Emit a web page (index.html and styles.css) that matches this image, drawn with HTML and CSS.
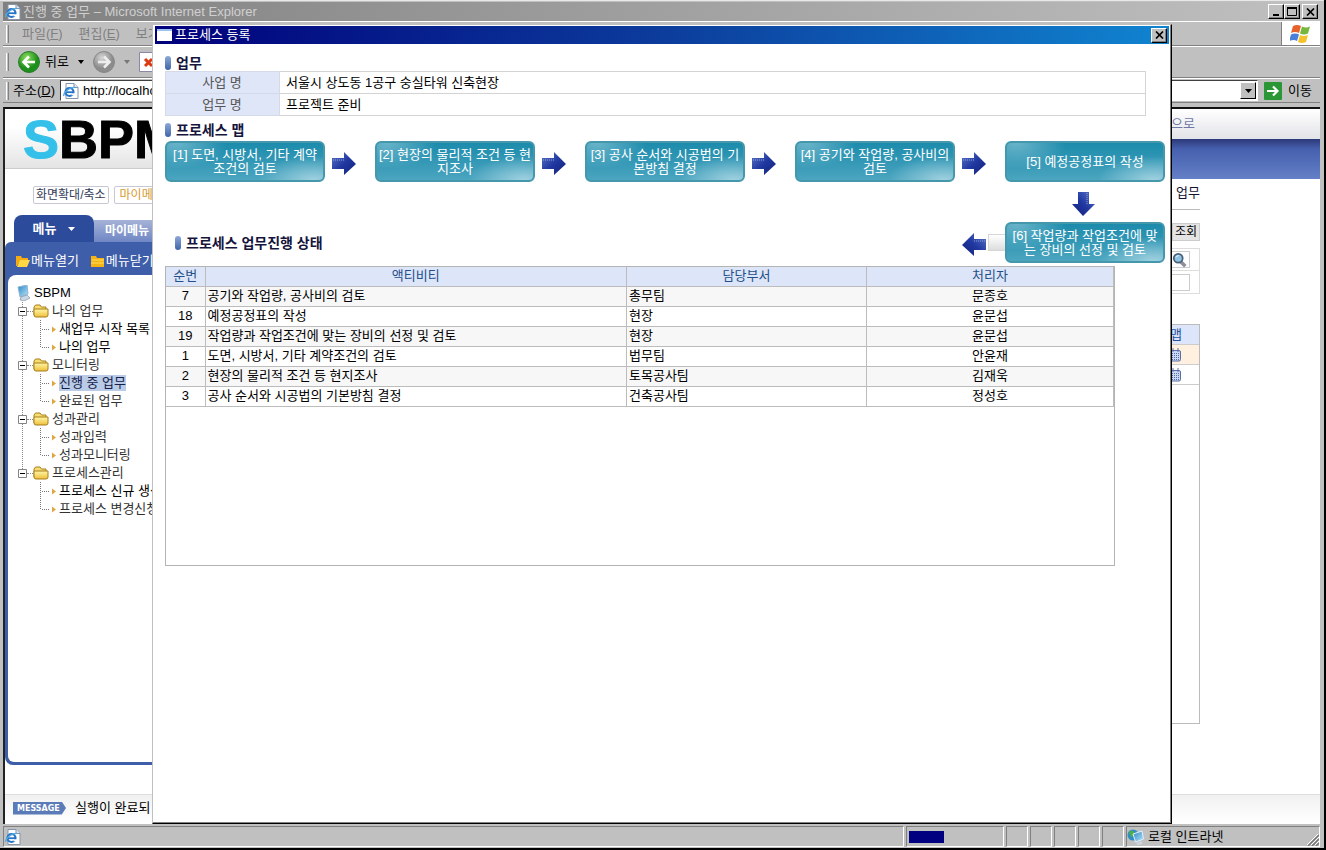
FILE: index.html
```
<!DOCTYPE html>
<html lang="ko">
<head>
<meta charset="utf-8">
<title>진행 중 업무 - Microsoft Internet Explorer</title>
<link rel="stylesheet" href="styles.css">
</head>
<body>
<svg class="defs" aria-hidden="true">
  <defs>
    <linearGradient id="g-arrow" x1="0" y1="0" x2="1" y2="1"><stop offset="0" stop-color="#5f78c8"/><stop offset=".5" stop-color="#2038a0"/><stop offset="1" stop-color="#13207a"/></linearGradient>
    <linearGradient id="g-fold" x1="0" y1="0" x2="0" y2="1"><stop offset="0" stop-color="#fff7a8"/><stop offset="1" stop-color="#eebf3a"/></linearGradient>
    <linearGradient id="g-screen" x1="0" y1="0" x2="1" y2="1"><stop offset="0" stop-color="#2c86c8"/><stop offset="1" stop-color="#b9e6f6"/></linearGradient>
    <radialGradient id="g-green" cx=".4" cy=".3"><stop offset="0" stop-color="#8fe05e"/><stop offset="1" stop-color="#1d8f1d"/></radialGradient>
    <radialGradient id="g-gray" cx=".4" cy=".3"><stop offset="0" stop-color="#d6d6d6"/><stop offset="1" stop-color="#8c8c8c"/></radialGradient>
  </defs>
  <symbol id="i-ie" viewBox="0 0 16 16"><path d="M3 .5h8l4 4v11H3z" fill="#fff" stroke="#8494ac"/><path d="M11 .5v4h4" fill="#dde6f2" stroke="#8494ac"/><circle cx="6.500" cy="9" r="4" fill="#fff" stroke="#2675c4" stroke-width="2.200"/><path d="M3 9.200h7" stroke="#2675c4" stroke-width="1.800"/><path d="M8.500 10.300h4v2h-4z" fill="#fff"/><path d="M.8 13C0 10 6 4 12 4.500" fill="none" stroke="#52a8e4" stroke-width="1.300"/></symbol>
  <symbol id="i-arrow" viewBox="0 0 24 24"><path d="M0 6h12V0l12 12-12 11v-6H0z" fill="url(#g-arrow)"/><path d="M1 8h11" stroke="#91a3de" stroke-width="1" stroke-dasharray="1 1"/></symbol>
  <symbol id="i-folder" viewBox="0 0 16 14"><path d="M1 3l1.500-2H7l1.500 2H13v3H4L2 12 1 11z" fill="#f6dc72" stroke="#a77f1c"/><path d="M1 5h14v6q0 2-2 2H3q-2 0-2-2z" fill="url(#g-fold)" stroke="#a77f1c"/></symbol>
  <symbol id="i-open" viewBox="0 0 14 12"><path d="M0 1h5l1 2h6v3H4l-3 5H0z" fill="#f5ac13"/><path d="M4 5h10l-3 7H1z" fill="#ffd844"/></symbol>
  <symbol id="i-close" viewBox="0 0 14 12"><path d="M0 1h5l1 2h7v9H0z" fill="#f5b315"/><path d="M1 5h12M0 8h13" stroke="#ffe15c"/></symbol>
  <symbol id="i-pc" viewBox="0 0 14 16"><path d="M1 2l9-2 1 9-8 3z" fill="url(#g-screen)" stroke="#8cb7d6"/><path d="M4 12l6-2 3 3-6 3-4-1z" fill="#cbd8e4" stroke="#8297ad" stroke-width=".7"/></symbol>
  <symbol id="i-map" viewBox="0 0 12 14"><rect x=".5" y="2.500" width="10" height="10.500" rx="1.500" fill="#c9d8f6" stroke="#5a6ea4"/><path d="M3 0v4M8 0v4" stroke="#5a6ea4"/><path d="M2 5.500h8M2 7.500h8M2 9.500h8M2 11.500h8" stroke="#5a6ea4" stroke-dasharray="1 1"/></symbol>
  <symbol id="i-mid" viewBox="0 0 21 18"><path d="M2.500 0v18M4 9.500h8" stroke="#777" stroke-dasharray="1 1"/><path d="M14 6.500l4 3-4 3z" fill="#dfa742"/></symbol>
  <symbol id="i-end" viewBox="0 0 21 18"><path d="M2.500 0v10M4 9.500h8" stroke="#777" stroke-dasharray="1 1"/><path d="M14 6.500l4 3-4 3z" fill="#dfa742"/></symbol>
  <symbol id="i-minus" viewBox="0 0 9 9"><path d="M.5.500h8v8h-8z" fill="#fff" stroke="#848484"/><path d="M2 4.500h5" stroke="#000"/></symbol>
  <symbol id="i-x" viewBox="0 0 9 8"><path d="M1 .5l7 7M8 .5l-7 7" stroke="#000" stroke-width="1.700"/></symbol>
</svg>

<div class="browser">
  <header class="titlebar">
    <svg class="ico16"><use href="#i-ie"/></svg>
    <h1 class="title-text">진행 중 업무 – Microsoft Internet Explorer</h1>
    <button class="winbtn" aria-label="최소화"><svg width="9" height="8"><path d="M1 6h6v2H1z"/></svg></button>
    <button class="winbtn" aria-label="최대화"><svg width="10" height="9"><path d="M.5 1h9v7.500h-9z" fill="none" stroke="#000"/><path d="M0 0h10v2H0z"/></svg></button>
    <button class="winbtn gap" aria-label="닫기"><svg width="9" height="8"><use href="#i-x"/></svg></button>
  </header>

  <nav class="menubar bar">
    <span class="grip"></span>
    <span>파일(<u>F</u>)</span><span>편집(<u>E</u>)</span><span>보기(<u>V</u>)</span>
    <span class="flag"><svg width="22" height="20" viewBox="0 0 22 20"><path d="M3 2q4-2 8 0L9 9q-4-2-8 0z" fill="#e8622c"/><path d="M12 2.500q4 2 8 0L18 9.500q-4 2-8 0z" fill="#77b83c"/><path d="M1 10.500q4-2 8 0L7 17q-3-2-8 0z" fill="#4a80d8"/><path d="M10 11q4 2 8 0l-2 7q-4 2-8 0z" fill="#f6c22c"/></svg></span>
  </nav>

  <div class="toolbar bar">
    <span class="grip"></span>
    <button class="tool"><svg width="22" height="22" viewBox="0 0 22 22"><circle cx="11" cy="11" r="10.500" fill="url(#g-green)" stroke="#2c7c2c"/><path d="M17 11H6M11 5.500L5.500 11l5.500 5.500" fill="none" stroke="#fff" stroke-width="2.600"/></svg>뒤로<svg class="caret" width="6" height="4"><path d="M0 0h6L3 4z"/></svg></button>
    <button class="tool" aria-label="앞으로"><svg width="22" height="22" viewBox="0 0 22 22"><circle cx="11" cy="11" r="10.500" fill="url(#g-gray)" stroke="#888"/><path d="M5 11h11M11 5.500l5.500 5.500-5.500 5.500" fill="none" stroke="#eee" stroke-width="2.600"/></svg><svg class="caret" width="6" height="4"><path d="M0 0h6L3 4z" fill="#777"/></svg></button>
    <button class="tool" aria-label="중지"><svg width="18" height="20" viewBox="0 0 18 20"><path d="M.5.500h17v19H.5z" fill="#fff" stroke="#88a"/><path d="M6 7l7 7M13 7l-7 7" stroke="#dc3a12" stroke-width="3"/></svg></button>
  </div>

  <form class="addressbar bar">
    <span class="grip"></span>
    <label for="addr">주소(<u>D</u>)</label>
    <div class="addr">
      <svg class="ico16"><use href="#i-ie"/></svg>
      <input id="addr" type="text" value="http://localhost">
      <button type="button" class="drop" aria-label="주소 목록"><svg width="7" height="4"><path d="M0 0h7L3.500 4z"/></svg></button>
    </div>
    <button type="button" class="go"><svg width="18" height="18" viewBox="0 0 18 18"><rect width="18" height="18" rx="1" fill="#2a9636"/><path d="M3 9h10M9 4.500L13.500 9 9 13.500" fill="none" stroke="#fff" stroke-width="2.200"/></svg>이동</button>
  </form>

  <main class="page">
    <div class="page-body">
      <aside class="side">
        <div class="logo"><span>S</span>BPM</div>
        <div class="quick"><button class="q1">화면확대/축소</button><button class="q2">마이메뉴</button></div>
        <div class="tabs"><button class="tab on">메뉴<svg width="7" height="4"><path d="M0 0h7L3.500 4z" fill="#fff"/></svg></button><button class="tab">마이메뉴</button></div>
        <div class="panel">
          <div class="panel-tools">
            <button><svg width="14" height="12"><use href="#i-open"/></svg>메뉴열기</button>
            <button><svg width="14" height="12"><use href="#i-close"/></svg>메뉴닫기</button>
          </div>
          <div class="tree-box">
            <div class="root"><svg width="14" height="16"><use href="#i-pc"/></svg>SBPM</div>
            <ul class="tree">
              <li class="group"><div class="node"><svg width="9" height="9"><use href="#i-minus"/></svg><i class="dots"></i><svg width="16" height="14"><use href="#i-folder"/></svg><span>나의 업무</span></div>
                <ul><li><svg width="21" height="18"><use href="#i-mid"/></svg><a href="#" class="dark">새업무 시작 목록</a></li><li><svg width="21" height="18"><use href="#i-end"/></svg><a href="#" class="dark">나의 업무</a></li></ul></li>
              <li class="group"><div class="node"><svg width="9" height="9"><use href="#i-minus"/></svg><i class="dots"></i><svg width="16" height="14"><use href="#i-folder"/></svg><span>모니터링</span></div>
                <ul><li><svg width="21" height="18"><use href="#i-mid"/></svg><a href="#" class="sel">진행 중 업무</a></li><li><svg width="21" height="18"><use href="#i-end"/></svg><a href="#">완료된 업무</a></li></ul></li>
              <li class="group"><div class="node"><svg width="9" height="9"><use href="#i-minus"/></svg><i class="dots"></i><svg width="16" height="14"><use href="#i-folder"/></svg><span>성과관리</span></div>
                <ul><li><svg width="21" height="18"><use href="#i-mid"/></svg><a href="#">성과입력</a></li><li><svg width="21" height="18"><use href="#i-end"/></svg><a href="#">성과모니터링</a></li></ul></li>
              <li class="group last"><div class="node"><svg width="9" height="9"><use href="#i-minus"/></svg><i class="dots"></i><svg width="16" height="14"><use href="#i-folder"/></svg><span>프로세스관리</span></div>
                <ul><li><svg width="21" height="18"><use href="#i-mid"/></svg><a href="#" class="dark">프로세스 신규 생성</a></li><li><svg width="21" height="18"><use href="#i-end"/></svg><a href="#">프로세스 변경신청</a></li></ul></li>
            </ul>
          </div>
        </div>
      </aside>
      <section class="content">
        <div class="topline"><a href="#">으로</a></div>
        <div class="band"></div>
        <div class="work">
          <h2 class="crumb">진행 중 업무</h2>
          <div class="actions"><button>조회</button></div>
          <div class="search">
            <div class="field"><input type="text" aria-label="업무 검색"><svg class="lens" width="16" height="16" viewBox="0 0 18 18"><path d="M9 10l6 6" stroke="#8a8f99" stroke-width="4"/><circle cx="7" cy="7" r="5" fill="#8fc3e6" stroke="#4a6076" stroke-width="2"/><path d="M4.500 6q1-2 3-2" stroke="#fff" fill="none"/></svg></div>
            <div class="field"><input type="text" aria-label="조건"></div>
          </div>
          <div class="list">
            <div class="lrow head"><span>맵</span></div>
            <div class="lrow hot"><svg width="12" height="14"><use href="#i-map"/></svg></div>
            <div class="lrow"><svg width="12" height="14"><use href="#i-map"/></svg></div>
          </div>
        </div>
      </section>
    </div>
    <footer class="message"><span class="tag">MESSAGE</span><span>실행이 완료되</span></footer>
  </main>

  <footer class="status">
    <div class="cell wide"><svg class="ico16"><use href="#i-ie"/></svg></div>
    <div class="cell prog"><i></i></div>
    <div class="cell sm"></div><div class="cell sm"></div><div class="cell sm"></div><div class="cell sm"></div><div class="cell sm"></div>
    <div class="cell zone"><svg width="17" height="16" viewBox="0 0 17 16"><circle cx="6" cy="6" r="5.500" fill="#2f8fc4"/><path d="M2 3q3-3 5 0t-3 5zM8 7l3-3v5z" fill="#4fae4a"/><path d="M6 5l9-3 1.500 8-8 3z" fill="url(#g-screen)" stroke="#e2eef8"/><path d="M9 14l6-2v3l-4 1z" fill="#cdd6e0"/></svg><span>로컬 인트라넷</span><svg class="resize" width="12" height="12"><path d="M1 12L12 1M5 12l7-7M9 12l3-3" stroke="#777" stroke-width="1.500"/><path d="M0 11L11 0M4 11l8-8M8 11l4-4" stroke="#fff"/></svg></div>
  </footer>
</div>

<div class="popup" role="dialog" aria-labelledby="ptitle">
  <div class="popup-title"><i class="winicon"></i><h2 id="ptitle">프로세스 등록</h2><button class="winbtn" aria-label="닫기"><svg width="9" height="8"><use href="#i-x"/></svg></button></div>
  <div class="popup-body">
    <h3 class="sec">업무</h3>
    <table class="info">
      <tr><th scope="row">사업 명</th><td>서울시 상도동 1공구 숭실타워 신축현장</td></tr>
      <tr><th scope="row">업무 명</th><td>프로젝트 준비</td></tr>
    </table>
    <h3 class="sec second">프로세스 맵</h3>
    <div class="flow">
      <div class="step">[1] 도면, 시방서, 기타 계약<br>조건의 검토</div>
      <svg class="arr"><use href="#i-arrow"/></svg>
      <div class="step">[2] 현장의 물리적 조건 등 현<br>지조사</div>
      <svg class="arr"><use href="#i-arrow"/></svg>
      <div class="step">[3] 공사 순서와 시공법의 기<br>본방침 결정</div>
      <svg class="arr"><use href="#i-arrow"/></svg>
      <div class="step">[4] 공기와 작업량, 공사비의<br>검토</div>
      <svg class="arr"><use href="#i-arrow"/></svg>
      <div class="step">[5] 예정공정표의 작성</div>
      <svg class="arr down"><use href="#i-arrow"/></svg>
      <h3 class="sec third">프로세스 업무진행 상태</h3>
      <div class="back"><svg class="arr left"><use href="#i-arrow"/></svg><i class="stub"></i></div>
      <div class="step six">[6] 작업량과 작업조건에 맞<br>는 장비의 선정 및 검토</div>
    </div>
    <div class="grid-box">
      <table class="grid">
        <colgroup><col class="c1"><col class="c2"><col class="c3"><col class="c4"></colgroup>
        <thead><tr><th>순번</th><th>액티비티</th><th>담당부서</th><th>처리자</th></tr></thead>
        <tbody>
          <tr><td>7</td><td>공기와 작업량, 공사비의 검토</td><td>총무팀</td><td>문종호</td></tr>
          <tr><td>18</td><td>예정공정표의 작성</td><td>현장</td><td>윤문섭</td></tr>
          <tr><td>19</td><td>작업량과 작업조건에 맞는 장비의 선정 및 검토</td><td>현장</td><td>윤문섭</td></tr>
          <tr><td>1</td><td>도면, 시방서, 기타 계약조건의 검토</td><td>법무팀</td><td>안윤재</td></tr>
          <tr><td>2</td><td>현장의 물리적 조건 등 현지조사</td><td>토목공사팀</td><td>김재욱</td></tr>
          <tr><td>3</td><td>공사 순서와 시공법의 기본방침 결정</td><td>건축공사팀</td><td>정성호</td></tr>
        </tbody>
      </table>
    </div>
  </div>
</div>
</body>
</html>
```
FILE: styles.css
```
* { box-sizing: border-box; }
html, body { height: 100%; }
body {
  margin: 0;
  overflow: hidden;
  background: #000;
  color: #000;
  font: 13px/16px "Liberation Sans", "Noto Sans CJK KR", sans-serif;
}
button, input { font: inherit; color: inherit; margin: 0; padding: 0; border: 0; background: none; }
h1, h2, h3 { margin: 0; font-size: 13px; font-weight: 400; }
ul { margin: 0; padding: 0; list-style: none; }
a { color: inherit; text-decoration: none; }
svg { flex: none; display: block; }
.defs { position: absolute; width: 0; height: 0; }
.ico16 { width: 16px; height: 16px; }

/* browser window */
.browser {
  position: relative;
  display: flex;
  flex-direction: column;
  height: 100vh;
  margin-right: 2px;
  padding: 1px 4px 1px 3px;
  background: #c0c0c0;
  border-bottom: 2px solid #000;
  border-top: 1px solid #e8e8e8;
}
.titlebar {
  display: flex;
  align-items: center;
  height: 19px;
  padding: 0 2px 0 2px;
  background: linear-gradient(90deg, #808080, #c0c0c0);
}
.title-text { flex: 1; padding-left: 2px; color: #d0d0d0; }
.winbtn {
  display: flex;
  align-items: center;
  justify-content: center;
  width: 16px;
  height: 15px;
  background: #c0c0c0;
  border: 1px solid;
  border-color: #fff #000 #000 #fff;
  box-shadow: inset -1px -1px #808080;
}
.winbtn.gap { margin-left: 2px; }
.bar {
  display: flex;
  align-items: center;
  border-top: 1px solid #fff;
  border-bottom: 1px solid #808080;
}
.grip { width: 3px; height: 18px; margin: 0 0 0 3px; border-left: 1px solid #fff; border-right: 1px solid #808080; }
.menubar { height: 25px; gap: 16px; color: #808080; }
.menubar .grip { margin-right: -3px; }
.flag { display: flex; align-items: center; justify-content: center; width: 39px; height: 23px; margin-left: auto; background: #fff; border-left: 1px solid #808080; }
.toolbar { height: 32px; }
.tool { display: flex; align-items: center; height: 24px; margin-left: 9px; gap: 5px; }
.caret { margin-left: 4px; }
.addressbar { height: 25px; }
.addressbar label { margin: 0 5px 0 4px; }
.addr {
  flex: 1;
  display: flex;
  align-items: center;
  height: 21px;
  padding: 0 1px 0 2px;
  background: #fff;
  border: 1px solid;
  border-color: #404040 #fff #fff #404040;
}
.addr input { flex: 1; min-width: 0; padding-left: 4px; outline: 0; }
.drop {
  display: flex;
  align-items: center;
  justify-content: center;
  width: 16px;
  height: 17px;
  background: #c0c0c0;
  border: 1px solid;
  border-color: #fff #000 #000 #fff;
}
.go { display: flex; align-items: center; gap: 6px; height: 20px; margin: 0 8px 0 6px; }

/* page under the dialog */
.page {
  flex: 1;
  display: flex;
  flex-direction: column;
  min-height: 0;
  margin-top: 4px;
  background: #fff;
  border-top: 2px solid #111;
  border-left: 2px solid #222;
}
.page-body { flex: 1; display: flex; min-height: 0; }
.side { display: flex; flex-direction: column; width: 200px; padding-bottom: 29px; }
.logo {
  height: 60px;
  padding-left: 18px;
  background: linear-gradient(#fff 30%, #e4e4e4);
  border-bottom: 1px solid #ccc;
  font: 700 54px/60px "Liberation Sans", sans-serif;
  -webkit-text-stroke: 1px;
}
.logo span { color: #35c0ea; }
.quick { display: flex; gap: 5px; padding: 17px 0 11px 28px; }
.quick button { height: 18px; padding: 0 2px; border: 1px solid #c8c8d4; border-radius: 2px; font-size: 12px; line-height: 16px; color: #333c58; white-space: nowrap; }
.quick .q2 { padding: 0 5px; color: #d79a2c; }
.tabs { display: flex; align-items: flex-end; padding-left: 9px; }
.tab { flex: 1; height: 22px; padding-left: 11px; background: linear-gradient(#a6b3d8, #6f86c4); color: #fff; font-weight: 700; font-size: 12px; text-align: left; }
.tab.on {
  display: flex;
  align-items: center;
  justify-content: center;
  gap: 12px;
  flex: none;
  width: 80px;
  height: 27px;
  padding: 0;
  background: #2d4b9b;
  border-radius: 8px 8px 0 0;
  font-size: 13px;
}
.panel {
  flex: 1;
  display: flex;
  flex-direction: column;
  padding: 0 0 3px 3px;
  background: #3f5ea9;
  border-radius: 6px 0 0 8px;
}
.panel-tools { display: flex; gap: 12px; padding: 11px 0 6px 8px; color: #fff; }
.panel-tools button { display: flex; align-items: center; gap: 1px; white-space: nowrap; }
.tree-box { flex: 1; padding: 9px 0 0 9px; background: #fff; border-radius: 8px 0 0 6px; }
.root { display: flex; align-items: center; gap: 3px; height: 18px; }
.tree { color: #333; white-space: nowrap; }
.group { padding-left: 1px; background: repeating-linear-gradient(#888 0 1px, transparent 1px 2px) 5px 0 / 1px 100% no-repeat; }
.group.last { background-size: 1px 9px; }
.node, .group li { display: flex; align-items: center; height: 18px; }
.dots { width: 6px; border-top: 1px dotted #888; }
.node span { padding-left: 3px; }
.group li { padding-left: 20px; }
.group .dark { color: #000; }
.sel { background: #b9cbe6; color: #14204a; }

.content { flex: 1; display: flex; flex-direction: column; }
.topline { display: flex; justify-content: flex-end; align-items: center; height: 30px; padding-right: 125px; background: linear-gradient(#fff, #e2e3e8); color: #7078a8; }
.band { height: 40px; background: linear-gradient(#2c3878, #4660ae 25%, #6480c6); }
.work { flex: 1; display: flex; flex-direction: column; padding: 5px 120px 70px 0; }
.crumb { height: 26px; padding-top: 1px; border-bottom: 1px solid #bbb; text-align: right; color: #111430; }
.actions { display: flex; justify-content: flex-end; padding: 13px 0 7px; }
.actions button { width: 28px; height: 18px; background: #e4e4e4; border: 1px solid #ccc; font-size: 12px; line-height: 14px; }
.search { border: 1px solid #ddd; }
.field { display: flex; justify-content: flex-end; align-items: center; height: 22px; padding-right: 9px; border-bottom: 1px solid #ddd; }
.field:last-child { border-bottom: 0; }
.field input { width: 60px; height: 17px; border: 1px solid #ccc; }
.lens { margin-left: -18px; margin-right: 2px; }
.list { flex: 1; margin-top: 30px; border: 1px solid #bbb; }
.lrow { display: flex; justify-content: flex-end; align-items: center; height: 20px; padding-right: 17px; border-bottom: 1px solid #ccc; }
.lrow.head { background: #dde5fa; color: #2553a0; }
.lrow.hot { background: #fff0e0; }
.message { display: flex; align-items: center; gap: 9px; height: 30px; padding: 0 0 3px 8px; background: linear-gradient(#f1f1f1, #fff); border-top: 1px solid #ddd; }
.tag { width: 53px; height: 13px; padding-left: 4px; background: #5b7ab8; clip-path: polygon(0 0, 92% 0, 100% 50%, 92% 100%, 0 100%); color: #fff; font: 700 8px/13px "DejaVu Sans", sans-serif; }

/* status bar */
.status { display: flex; gap: 2px; height: 23px; padding-top: 2px; }
.cell { display: flex; align-items: center; width: 22px; border: 1px solid; border-color: #808080 #fff #fff #808080; }
.cell.wide { flex: 1; padding-left: 1px; }
.cell.prog { width: 98px; padding-left: 2px; }
.cell.prog i { width: 35px; height: 12px; background: #000080; }
.cell.zone { width: 194px; gap: 4px; }
.resize { margin-left: auto; align-self: flex-end; }

/* dialog window lies over the page */
.popup {
  position: absolute;
  inset: 24px 154px 26px 152px;
  display: flex;
  flex-direction: column;
  padding: 1px;
  background: #fff;
  border: 1px solid;
  border-color: #c0c0c0 #000 #000 #c0c0c0;
  box-shadow: inset -1px -1px #808080;
}
.popup-title {
  display: flex;
  align-items: center;
  height: 18px;
  margin: 0 1px;
  padding: 0 2px;
  background: linear-gradient(90deg, #00007c, #0c3c9c 50%, #1084d0);
  color: #fff;
}
.popup-title h2 { flex: 1; padding-left: 3px; }
.winicon { width: 15px; height: 12px; background: #fff; border-top: 2px solid #9cc4f0; }
.popup-body { flex: 1; padding: 11px 5px 0 11px; }
.sec { display: flex; align-items: center; gap: 5px; height: 16px; font-size: 14px; font-weight: 700; color: #14143c; }
.sec::before { content: ""; width: 6px; height: 14px; border-radius: 3px; background: linear-gradient(#8ea9d8, #3e64a8); }
.second { margin: 6px 0 3px; }
.info { width: calc(100% - 19px); border-collapse: collapse; }
.info th, .info td { height: 22px; padding: 0 7px 0 6px; border: 1px solid #d4d4d4; text-align: left; }
.info th { width: 114px; background: #dfe6f8; border-color: #d4dae8; font-weight: 400; text-align: center; color: #555; }
.flow { display: grid; grid-template-columns: 160px 1fr 160px 1fr 160px 1fr 160px 1fr 160px; grid-template-rows: 41px 40px 41px; align-items: center; }
.step {
  display: flex;
  align-items: center;
  justify-content: center;
  height: 41px;
  background:
    radial-gradient(ellipse 50px 26px at 6% 0, #8fc8d8aa, transparent),
    radial-gradient(ellipse 56px 24px at 94% 100%, #b4dce8cc, transparent),
    linear-gradient(#1c8bac, #4ba5bf);
  border: 2px solid #4597ac;
  border-radius: 6px;
  color: #fff;
  text-align: center;
  line-height: 14px;
  white-space: nowrap;
}
.arr { width: 24px; height: 24px; margin: 4px 0 0 7px; }
.down { grid-column: 9; justify-self: center; margin: 4px 4px 0 0; transform: rotate(90deg); }
.third { grid-column: 1 / 6; padding-left: 10px; }
.back { grid-column: 8; display: flex; align-items: center; }
.left { transform: scaleX(-1); }
.stub { flex: 1; height: 17px; margin-left: 2px; background: linear-gradient(#fff, #ddd); border: 1px solid #d6d6d6; border-right: 0; }
.six { grid-column: 9; }
.grid-box { width: calc(100% - 50px); height: 300px; margin-top: 3px; border: 1px solid #b4b4b4; }
.grid { width: 100%; border-collapse: collapse; table-layout: fixed; }
.c1 { width: 39px; }
.c3 { width: 240px; }
.c4 { width: 247px; }
.grid th, .grid td { height: 20px; padding: 0 2px; border: 1px solid #bcbcbc; border-top: 0; border-left: 0; line-height: 16px; }
.grid th { height: 19px; background: #dde5f8; color: #235088; font-weight: 400; }
.grid tbody tr:nth-child(odd) { background: #f7f7f7; }
.grid td:first-child, .grid td:last-child { text-align: center; }
```
